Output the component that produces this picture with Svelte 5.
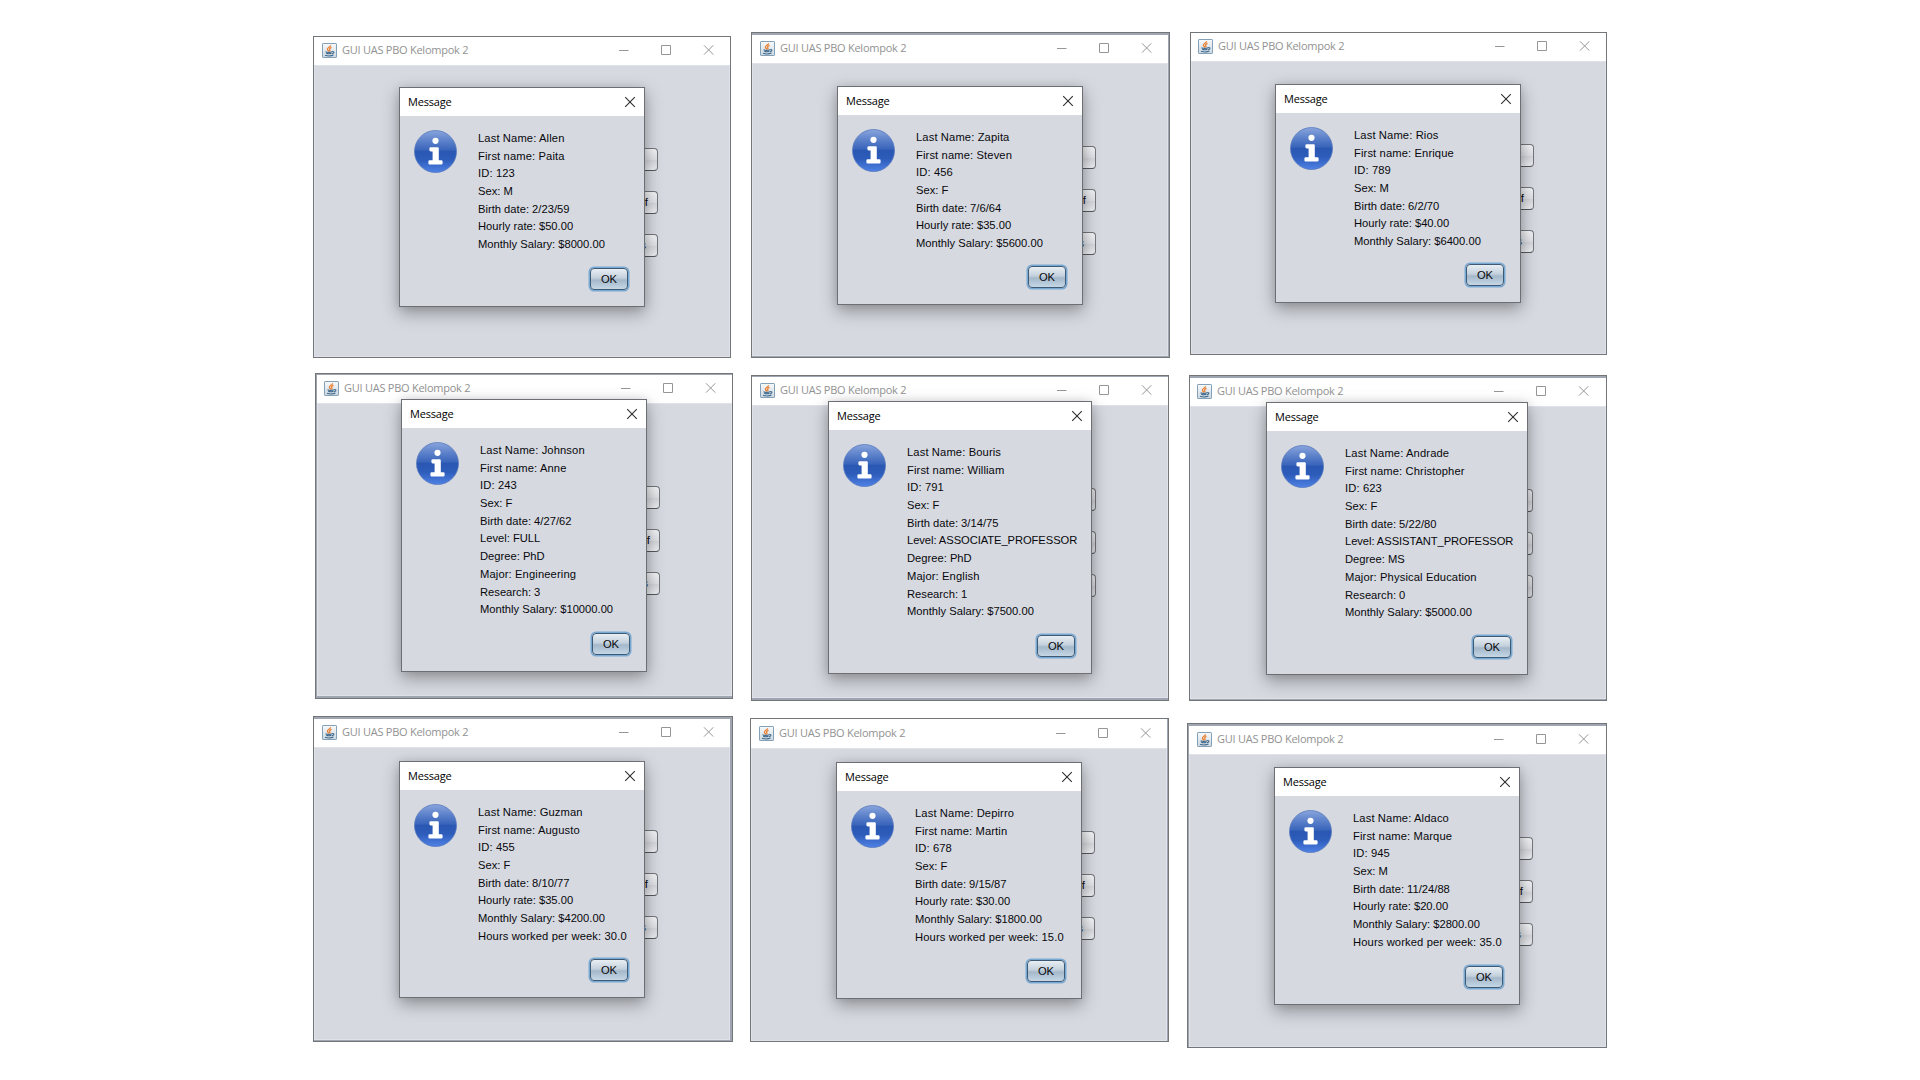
<script>
  const salaried = (last, first, id, sex, birth, rate, salary, hours) => [
    `Last Name: ${last}`, `First name: ${first}`, `ID: ${id}`, `Sex: ${sex}`, `Birth date: ${birth}`,
    `Hourly rate: ${rate}`, `Monthly Salary: ${salary}`,
    ...(hours ? [`Hours worked per week: ${hours}`] : [])
  ];
  const faculty = (last, first, id, sex, birth, level, degree, major, research, salary) => [
    `Last Name: ${last}`, `First name: ${first}`, `ID: ${id}`, `Sex: ${sex}`, `Birth date: ${birth}`,
    `Level: ${level}`, `Degree: ${degree}`, `Major: ${major}`, `Research: ${research}`, `Monthly Salary: ${salary}`
  ];

  // frame: [left, top, right, bottom]; edge: [top, right, bottom, left] thickness of the tinted rim
  // head: bottom of the title bar; icon: left of the title icon; box: dialog [left, top, right, bottom]
  const windows = [
    { frame: [313, 36, 731, 358], edge: [0, 0, 0, 0], head: 65, icon: 322, box: [399, 87, 645, 307],
      lines: salaried('Allen', 'Paita', '123', 'M', '2/23/59', '$50.00', '$8000.00') },
    { frame: [751, 32, 1170, 358], edge: [2, 1, 1, 0], head: 63, icon: 760, box: [837, 86, 1083, 305],
      lines: salaried('Zapita', 'Steven', '456', 'F', '7/6/64', '$35.00', '$5600.00') },
    { frame: [1190, 32, 1607, 355], edge: [0, 0, 0, 0], head: 61, icon: 1198, box: [1275, 84, 1521, 303],
      lines: salaried('Rios', 'Enrique', '789', 'M', '6/2/70', '$40.00', '$6400.00') },
    { frame: [315, 373, 733, 699], edge: [1, 0, 2, 1], head: 403, icon: 324, box: [401, 399, 647, 672],
      lines: faculty('Johnson', 'Anne', '243', 'F', '4/27/62', 'FULL', 'PhD', 'Engineering', '3', '$10000.00') },
    { frame: [751, 375, 1169, 701], edge: [1, 0, 2, 0], head: 405, icon: 760, box: [828, 401, 1092, 674],
      lines: faculty('Bouris', 'William', '791', 'F', '3/14/75', 'ASSOCIATE_PROFESSOR', 'PhD', 'English', '1', '$7500.00') },
    { frame: [1189, 375, 1607, 701], edge: [2, 0, 1, 0], head: 406, icon: 1197, box: [1266, 402, 1528, 675],
      lines: faculty('Andrade', 'Christopher', '623', 'F', '5/22/80', 'ASSISTANT_PROFESSOR', 'MS', 'Physical Education', '0', '$5000.00') },
    { frame: [313, 716, 733, 1042], edge: [2, 2, 1, 0], head: 747, icon: 322, box: [399, 761, 645, 998],
      lines: salaried('Guzman', 'Augusto', '455', 'F', '8/10/77', '$35.00', '$4200.00', '30.0') },
    { frame: [750, 718, 1169, 1042], edge: [0, 1, 0, 0], head: 748, icon: 759, box: [836, 762, 1082, 999],
      lines: salaried('Depirro', 'Martin', '678', 'F', '9/15/87', '$30.00', '$1800.00', '15.0') },
    { frame: [1187, 723, 1607, 1048], edge: [2, 0, 0, 1], head: 754, icon: 1197, box: [1274, 767, 1520, 1005],
      lines: salaried('Aldaco', 'Marque', '945', 'M', '11/24/88', '$20.00', '$2800.00', '35.0') }
  ];

  function frameStyle({ frame: [l, t, r, b], edge, head, icon }) {
    return `left:${l}px;top:${t}px;width:${r - l}px;height:${b - t}px;` +
      `--edge:${edge.map((e) => e + 'px').join(' ')};` +
      `--head:${head - t - 1 - edge[0]}px;--lead:${icon - l - 1 - edge[3]}px`;
  }
  const boxStyle = ({ frame: [l, t], box }) =>
    `left:${box[0] - l - 1}px;top:${box[1] - t - 1}px;width:${box[2] - box[0]}px;height:${box[3] - box[1]}px`;
  const tracking = (line) =>
    /^(Last|First|Hours|Major|ID)/.test(line) ? 'loose' : line.includes('_') ? 'tight' : '';
</script>

<svg class="defs" width="0" height="0" aria-hidden="true">
  <defs>
    <linearGradient id="orb" x1="0" y1="0" x2="0" y2="1">
      <stop offset="0" stop-color="#88a4dc" />
      <stop offset=".28" stop-color="#577dc8" />
      <stop offset=".46" stop-color="#3a65bb" />
      <stop offset=".5" stop-color="#2957b2" />
      <stop offset=".7" stop-color="#2d5cba" />
      <stop offset="1" stop-color="#4f82e6" />
    </linearGradient>
    <linearGradient id="tile" x1="0" y1="0" x2="0" y2="1">
      <stop offset="0" stop-color="#f8fafb" />
      <stop offset="1" stop-color="#cbd8e2" />
    </linearGradient>
  </defs>
</svg>

<main>
  {#each windows as w}
    <section class="window" style={frameStyle(w)}>
      <div class="rim">
        <header>
          <div class="bar">
            <svg class="java" viewBox="0 0 15 15">
              <rect x=".5" y=".5" width="14" height="14" rx=".6" fill="url(#tile)" stroke="#83a0b6" />
              <path d="M8.600 2.200C8.700 4 5 4.700 5.400 6.300c.2.800 1 1.200 1.500 2M9.500 4.400C7.800 5.200 7.100 5.900 7.800 6.900c.4.600.2 1-.2 1.400" fill="none" stroke="#ea8030" stroke-width="1.300" />
              <path d="M3.500 8.800c1.500.6 4.800.6 6.600 0M4.200 10.300c1.300.5 3.900.5 5.300 0M3 12.200c2.200.8 6.300.8 8.500-.1M10.200 8.600c2.300-.4 2.400 1.500-.1 2" fill="none" stroke="#41698b" stroke-width="1.100" />
            </svg>
            <h1>GUI UAS PBO Kelompok 2</h1>
            <svg class="controls" viewBox="0 0 96 12">
              <path d="M1 6.500H10.500M43.500 1.500H52.500V10.500H43.500ZM86 1.300L95.300 10.600M95.300 1.300L86 10.600" fill="none" stroke="#969696" stroke-width="1" />
            </svg>
          </div>
        </header>
        <div class="pane">
          <span class="choice"></span>
          <span class="choice">f</span>
          <span class="choice dim">s</span>
        </div>
      </div>
      <article class="dialog" style={boxStyle(w)}>
        <div class="caption">
          <h2>Message</h2>
          <svg viewBox="0 0 12 12"><path d="M1.200 1.200L10.800 10.800M10.800 1.200L1.200 10.800" stroke="#2c2c2c" stroke-width="1.050" /></svg>
        </div>
        <div class="body">
          <svg class="info" viewBox="0 0 43 43">
            <circle cx="21.500" cy="21.500" r="21" fill="url(#orb)" stroke="#5779bd" stroke-width=".8" />
            <circle cx="21.500" cy="10.800" r="3.100" fill="#fff" />
            <path d="M16.700 17.200H23.700Q24.800 17.200 24.800 18.300V30.300H27.300Q28.600 30.300 28.600 31.600V33.200Q28.600 34.500 27.300 34.500H15.700Q14.400 34.500 14.400 33.200V31.600Q14.400 30.300 15.700 30.300H18.600V21.400H16.700Q15.400 21.400 15.400 20.100V18.500Q15.400 17.200 16.700 17.200Z" fill="#fff" />
          </svg>
          <div class="lines">
            {#each w.lines as line}<p class={tracking(line)}>{line}</p>{/each}
          </div>
        </div>
        <button>OK</button>
      </article>
    </section>
  {/each}
</main>

<style>
  :global(body) { background: #fff; overflow: hidden; }
  .defs { position: absolute; }
  main {
    position: relative;
    width: 1920px;
    height: 1080px;
    font-family: "Liberation Sans", Arial, sans-serif;
    color: #08080c;
  }
  .window {
    position: absolute;
    box-sizing: border-box;
    border: 1px solid #737679;
    background: #a0a6b1;
    overflow: hidden;
  }
  .rim {
    box-sizing: border-box;
    width: 100%;
    height: 100%;
    padding: var(--edge);
    display: flex;
    flex-direction: column;
  }
  header {
    height: var(--head);
    flex: none;
    background: #fff;
    display: flex;
    align-items: flex-end;
  }
  .bar {
    height: 30px;
    padding-left: var(--lead);
    display: flex;
    align-items: center;
  }
  .java { width: 15px; height: 15px; flex: none; }
  h1, h2 {
    margin: 0;
    font-family: "Open Sans", "Noto Sans", sans-serif;
    font-weight: 400;
    font-size: 11px;
    line-height: 16px;
    white-space: nowrap;
  }
  h1 { width: 276px; margin-left: 5px; color: #929292; letter-spacing: -.25px; }
  .controls { width: 96px; height: 12px; flex: none; }
  .pane {
    flex: 1;
    background: #d6d9e0;
    box-shadow: inset 0 0 0 1px #dfe2e8;
    padding: 83px 0 0 calc(var(--lead) + 236px);
    display: flex;
    flex-direction: column;
    gap: 20px;
  }
  .choice {
    box-sizing: border-box;
    width: 100px;
    height: 23px;
    padding-right: 9px;
    border: 1px solid #74777c;
    border-bottom-color: #55585d;
    border-radius: 4px;
    background: linear-gradient(#f4f5f7, #dfe1e5 50%, #d5d7dc 55%, #eceef1);
    font-size: 11.25px;
    line-height: 21px;
    text-align: right;
  }
  .dim { color: #2f4a68; padding-right: 11px; }
  .dialog {
    position: absolute;
    box-sizing: border-box;
    border: 1px solid #6c6f74;
    background: #d6d9e0;
    box-shadow: 0 6px 16px rgba(0, 0, 0, .34), 0 0 8px rgba(0, 0, 0, .08);
    display: flex;
    flex-direction: column;
  }
  .caption {
    height: 28px;
    flex: none;
    padding: 0 8px;
    background: #fff;
    display: flex;
    justify-content: space-between;
    align-items: center;
  }
  h2 { color: #000; letter-spacing: -.2px; }
  .caption svg { width: 12px; height: 12px; margin-bottom: 1px; }
  .body { flex: 1; padding: 13.500px 0 0 14px; display: flex; align-items: flex-start; }
  .info { width: 43px; height: 43px; flex: none; }
  .lines { padding: .500px 0 0 21px; }
  p { margin: 0; height: 17.700px; line-height: 17.700px; font-size: 11.200px; white-space: nowrap; }
  .loose { letter-spacing: .120px; }
  .tight { letter-spacing: -.070px; }
  button {
    align-self: flex-end;
    flex: none;
    box-sizing: border-box;
    width: 38px;
    height: 22px;
    margin: 0 16px 16px 0;
    padding: 0;
    border: 1px solid #3f5a75;
    border-radius: 4px;
    background: linear-gradient(#e9eff3, #c3d0dc 45%, #a4b8ca 55%, #c5d7e6);
    box-shadow: 0 0 0 1.500px #78a9d3;
    font: 11.200px "Liberation Sans", Arial, sans-serif;
    color: #08080c;
  }
</style>
